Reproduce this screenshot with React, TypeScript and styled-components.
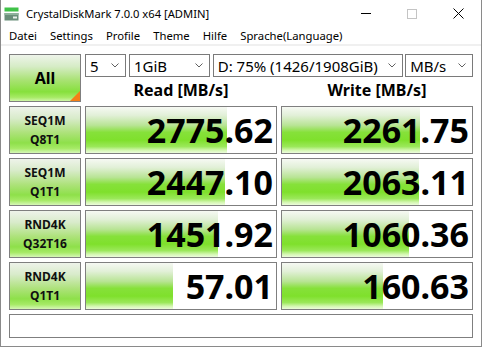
import styled, { createGlobalStyle } from 'styled-components';

const GlobalStyle = createGlobalStyle`
  html, body {
    margin: 0;
    padding: 0;
    background: #ffffff;
  }
  body {
    font-family: 'Noto Sans', 'Open Sans', Arial, sans-serif;
  }
  * { box-sizing: border-box; }
`;

const barGradient = `linear-gradient(to bottom,
  #f6f9f3 0%,
  #e2f0d8 18%,
  #b8e494 40%,
  #86e13a 55%,
  #7fe02c 72%,
  #9be85a 86%,
  #d3f7b0 94%,
  #ecfcdc 100%)`;

const Window = styled.div`
  width: 482px;
  height: 347px;
  border: 1px solid #8a8a8a;
  border-top: none;
  background: #ffffff;
  display: flex;
  flex-direction: column;
  overflow: hidden;
`;

const TitleBar = styled.div`
  flex-shrink: 0;
  height: 27px;
  display: flex;
  align-items: center;
  padding-left: 3px;
  font-size: 11.2px;
  color: #000;
`;

const TitleText = styled.span`
  margin-left: 7px;
  flex: 1;
`;

const Controls = styled.div`
  display: flex;
  align-items: center;
  height: 100%;
`;

const CtrlBtn = styled.div`
  width: 46px;
  height: 100%;
  display: flex;
  align-items: center;
  justify-content: center;
`;

const MenuBar = styled.div`
  flex-shrink: 0;
  height: 19px;
  display: flex;
  align-items: center;
  gap: 13px;
  padding-left: 8px;
  font-size: 11.3px;
  color: #000;
  border-bottom: 2px solid #f0f0f0;
`;

const MenuItem = styled.span`
  line-height: 16px;
`;

const Panel = styled.div`
  flex-shrink: 0;
  padding: 8px 0 0 8px;
  display: grid;
  grid-template-columns: 72px 192px 192px;
  grid-template-rows: 48px 48px 48px 48px 48px 24px;
  column-gap: 4px;
  row-gap: 4px;
`;

const AllButton = styled.div`
  position: relative;
  border: 1px solid #7f7f7f;
  background: linear-gradient(to bottom, #eef4ea 0%, #d6ecc6 25%, #a8e272 55%, #86e03c 80%, #a6ea64 92%, #cff6a8 100%);
  display: flex;
  align-items: center;
  justify-content: center;
  font-size: 16px;
  font-weight: 700;
  color: #000;
  &::after {
    content: '';
    position: absolute;
    right: 0;
    bottom: 0;
    width: 0;
    height: 0;
    border-left: 10px solid transparent;
    border-bottom: 10px solid #f57f17;
  }
`;

const TopArea = styled.div`
  grid-column: 2 / 4;
  display: flex;
  flex-direction: column;
`;

const ComboRow = styled.div`
  display: flex;
  height: 23px;
`;

const Combo = styled.div<{ $w: number; $gap: number }>`
  width: ${(p) => p.$w}px;
  margin-right: ${(p) => p.$gap}px;
  height: 100%;
  border: 1px solid #7a7a7a;
  background: #fff;
  display: flex;
  align-items: center;
  justify-content: space-between;
  padding: 0 6px 0 4px;
  font-size: 15px;
  color: #000;
  white-space: nowrap;
  overflow: hidden;
`;

const HeaderRow = styled.div`
  flex: 1;
  display: grid;
  grid-template-columns: 192px 192px;
  column-gap: 4px;
  align-items: center;
`;

const Header = styled.div`
  text-align: center;
  font-size: 16px;
  font-weight: 700;
  color: #000;
  padding-top: 1px;
`;

const Label = styled.div`
  border: 1px solid #7f7f7f;
  background: linear-gradient(to bottom, #eef3ea 0%, #d8ebca 25%, #aee27c 55%, #8ee04a 78%, #a6ea66 90%, #d6f7b6 100%);
  display: flex;
  flex-direction: column;
  align-items: center;
  justify-content: center;
  font-size: 12px;
  font-weight: 700;
  line-height: 19px;
  color: #101010;
`;

const Value = styled.div<{ $fill: number }>`
  border: 1px solid #7f7f7f;
  background-color: #fff;
  background-image: ${barGradient};
  background-repeat: no-repeat;
  background-size: ${(p) => p.$fill}px 100%;
  display: flex;
  align-items: center;
  justify-content: flex-end;
  padding-right: 3px;
  font-size: 34px;
  font-weight: 700;
  color: #000;
`;

const Comment = styled.div`
  grid-column: 1 / 4;
  border: 1px solid #7f7f7f;
  background: #fff;
`;

const Chevron = () => (
  <svg width="8" height="5" viewBox="0 0 8 5">
    <path d="M0.5 0.5 L4 4 L7.5 0.5" fill="none" stroke="#606060" strokeWidth="1" />
  </svg>
);

const AppIcon = () => (
  <svg width="15" height="14" viewBox="0 0 15 14">
    <rect x="0.5" y="0.5" width="14" height="4" fill="#3fc248" />
    <rect x="0.5" y="6" width="14" height="7.5" fill="#6a8f7a" />
    <rect x="0.5" y="6" width="14" height="2" fill="#8fb39c" />
    <rect x="9" y="9.5" width="4" height="2" fill="#e8f0ea" />
  </svg>
);

const rows = [
  { a: 'SEQ1M', b: 'Q8T1', read: '2775.62', rf: 141, write: '2261.75', wf: 138 },
  { a: 'SEQ1M', b: 'Q1T1', read: '2447.10', rf: 139, write: '2063.11', wf: 137 },
  { a: 'RND4K', b: 'Q32T16', read: '1451.92', rf: 132, write: '1060.36', wf: 127 },
  { a: 'RND4K', b: 'Q1T1', read: '57.01', rf: 87, write: '160.63', wf: 101 },
];

const menus = ['Datei', 'Settings', 'Profile', 'Theme', 'Hilfe', 'Sprache(Language)'];

export default function App() {
  return (
    <>
      <GlobalStyle />
      <Window>
        <TitleBar>
          <AppIcon />
          <TitleText>CrystalDiskMark 7.0.0 x64 [ADMIN]</TitleText>
          <Controls>
            <CtrlBtn>
              <svg width="10" height="1"><rect width="10" height="1" fill="#000" /></svg>
            </CtrlBtn>
            <CtrlBtn>
              <svg width="10" height="10"><rect x="0.5" y="0.5" width="9" height="9" fill="none" stroke="#c4c4c4" /></svg>
            </CtrlBtn>
            <CtrlBtn>
              <svg width="11" height="11"><path d="M0.5 0.5 L10.5 10.5 M10.5 0.5 L0.5 10.5" stroke="#000" strokeWidth="1" /></svg>
            </CtrlBtn>
          </Controls>
        </TitleBar>
        <MenuBar>
          {menus.map((m) => <MenuItem key={m}>{m}</MenuItem>)}
        </MenuBar>
        <Panel>
          <AllButton>All</AllButton>
          <TopArea>
            <ComboRow>
              <Combo $w={41} $gap={3}><span>5</span><Chevron /></Combo>
              <Combo $w={81} $gap={3}><span>1GiB</span><Chevron /></Combo>
              <Combo $w={191} $gap={2}><span>D: 75% (1426/1908GiB)</span><Chevron /></Combo>
              <Combo $w={68} $gap={0}><span>MB/s</span><Chevron /></Combo>
            </ComboRow>
            <HeaderRow>
              <Header>Read [MB/s]</Header>
              <Header>Write [MB/s]</Header>
            </HeaderRow>
          </TopArea>
          {rows.map((r) => (
            <>
              <Label key={r.a + r.b}><span>{r.a}</span><span>{r.b}</span></Label>
              <Value $fill={r.rf}>{r.read}</Value>
              <Value $fill={r.wf}>{r.write}</Value>
            </>
          ))}
          <Comment />
        </Panel>
      </Window>
    </>
  );
}
